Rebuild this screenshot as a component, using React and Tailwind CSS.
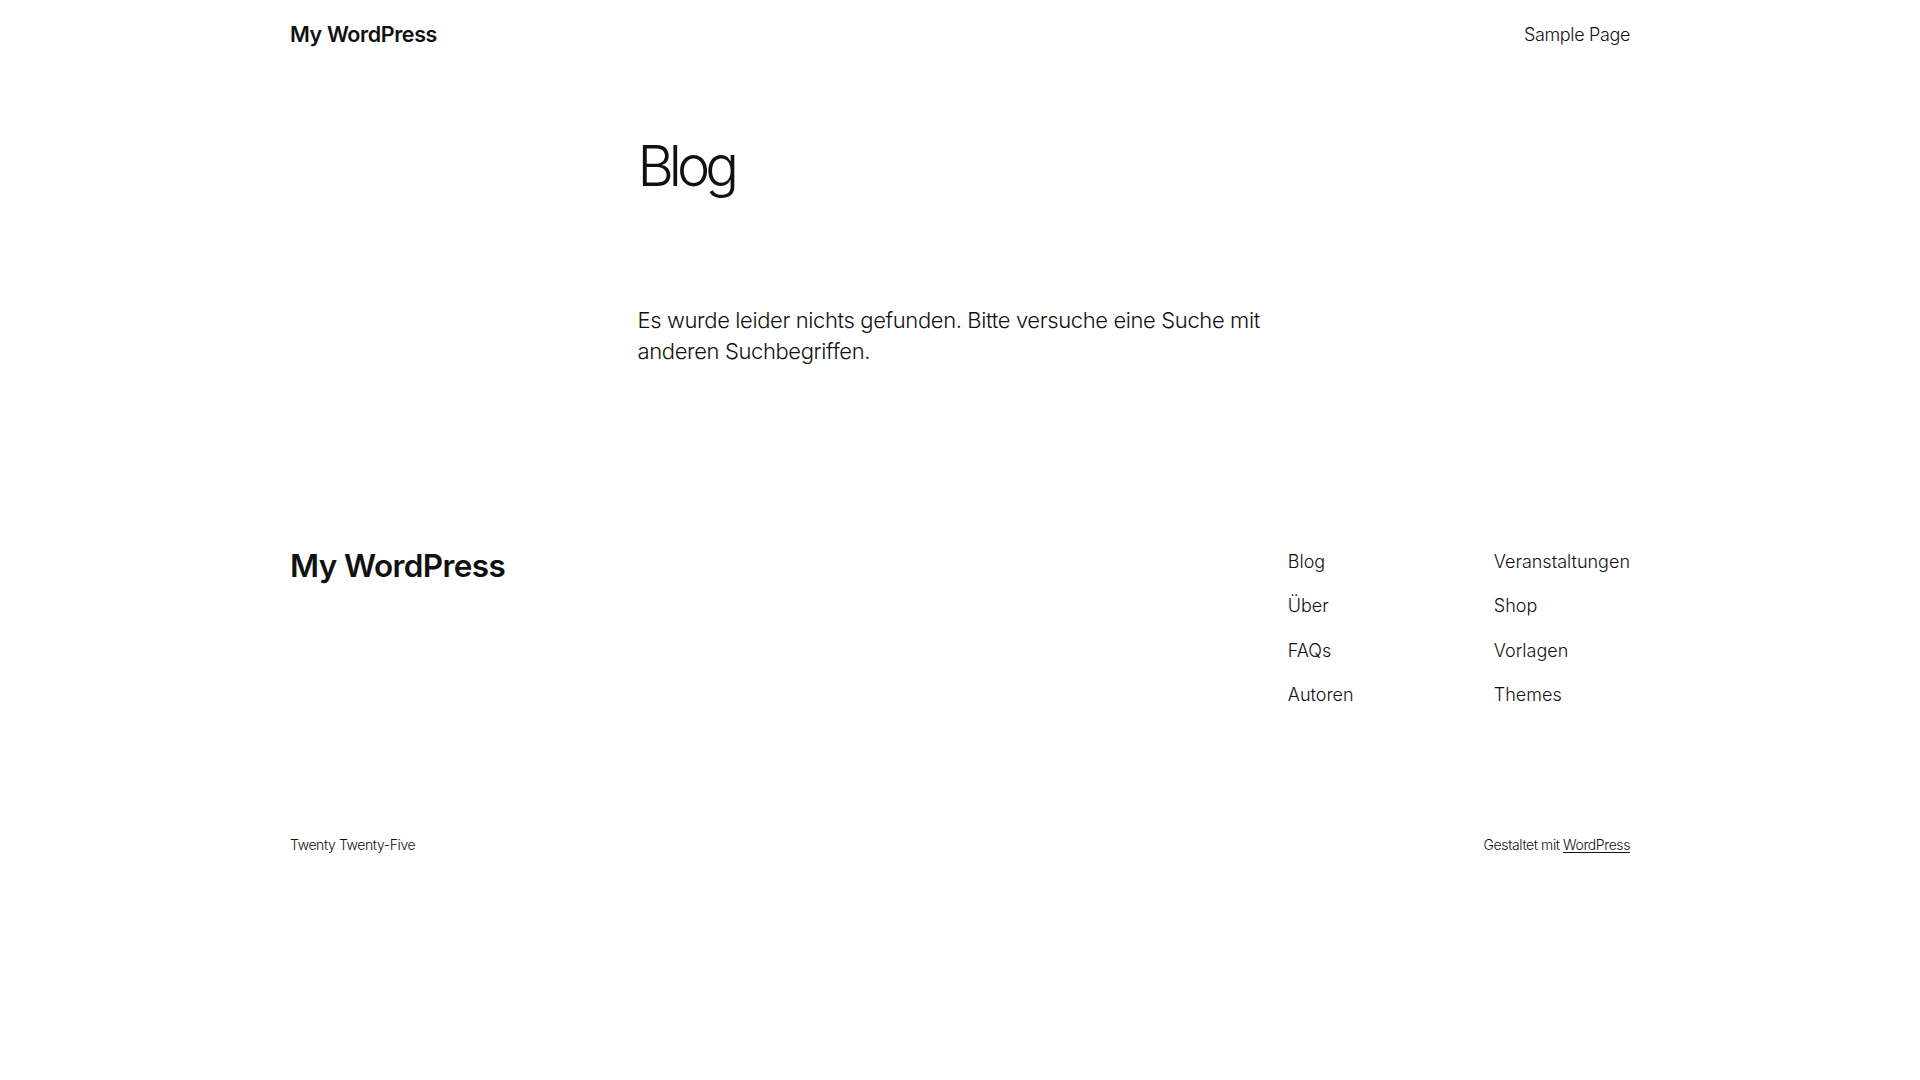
export default function App() {
  const col1 = ['Blog', 'Über', 'FAQs', 'Autoren'];
  const col2 = ['Veranstaltungen', 'Shop', 'Vorlagen', 'Themes'];

  return (
    <div className="min-h-screen bg-white text-[#111111] font-['Inter','Noto_Sans',sans-serif]">
      {/* Header */}
      <header className="mx-auto flex h-[68px] max-w-[1340px] items-center justify-between">
        <a className="text-[21.5px] font-semibold tracking-[-0.4px]">My WordPress</a>
        <nav>
          <a className="text-[18px] font-light tracking-[-0.35px]">Sample Page</a>
        </nav>
      </header>

      {/* Main */}
      <main className="mx-auto w-[645px] pt-[65px]">
        <h1 className="text-[56px] font-light leading-[1.2] tracking-[-5px]">Blog</h1>
        <p className="mt-[105px] text-[22px] font-light leading-[1.4] tracking-[-0.38px]">
          Es wurde leider nichts gefunden. Bitte versuche eine Suche mit anderen Suchbegriffen.
        </p>
      </main>

      {/* Footer */}
      <footer className="mx-auto mt-[180px] max-w-[1340px]">
        <div className="flex items-start justify-between">
          <a className="text-[31.5px] font-semibold leading-[1.2] tracking-[-0.6px]">My WordPress</a>
          <div className="flex pt-[1px]">
            <ul className="flex w-[206px] flex-col gap-[17.5px]">
              {col1.map((item) => (
                <li key={item} className="text-[18px] font-light leading-[27px]">{item}</li>
              ))}
            </ul>
            <ul className="flex flex-col gap-[17.5px]">
              {col2.map((item) => (
                <li key={item} className="text-[18px] font-light leading-[27px]">{item}</li>
              ))}
            </ul>
          </div>
        </div>
        <div className="mt-[126px] flex items-center justify-between pb-[60px] text-[14px] font-light leading-[21px] tracking-[-0.4px]">
          <p>Twenty Twenty-Five</p>
          <p>
            Gestaltet mit <a className="underline underline-offset-2">WordPress</a>
          </p>
        </div>
      </footer>
    </div>
  );
}
